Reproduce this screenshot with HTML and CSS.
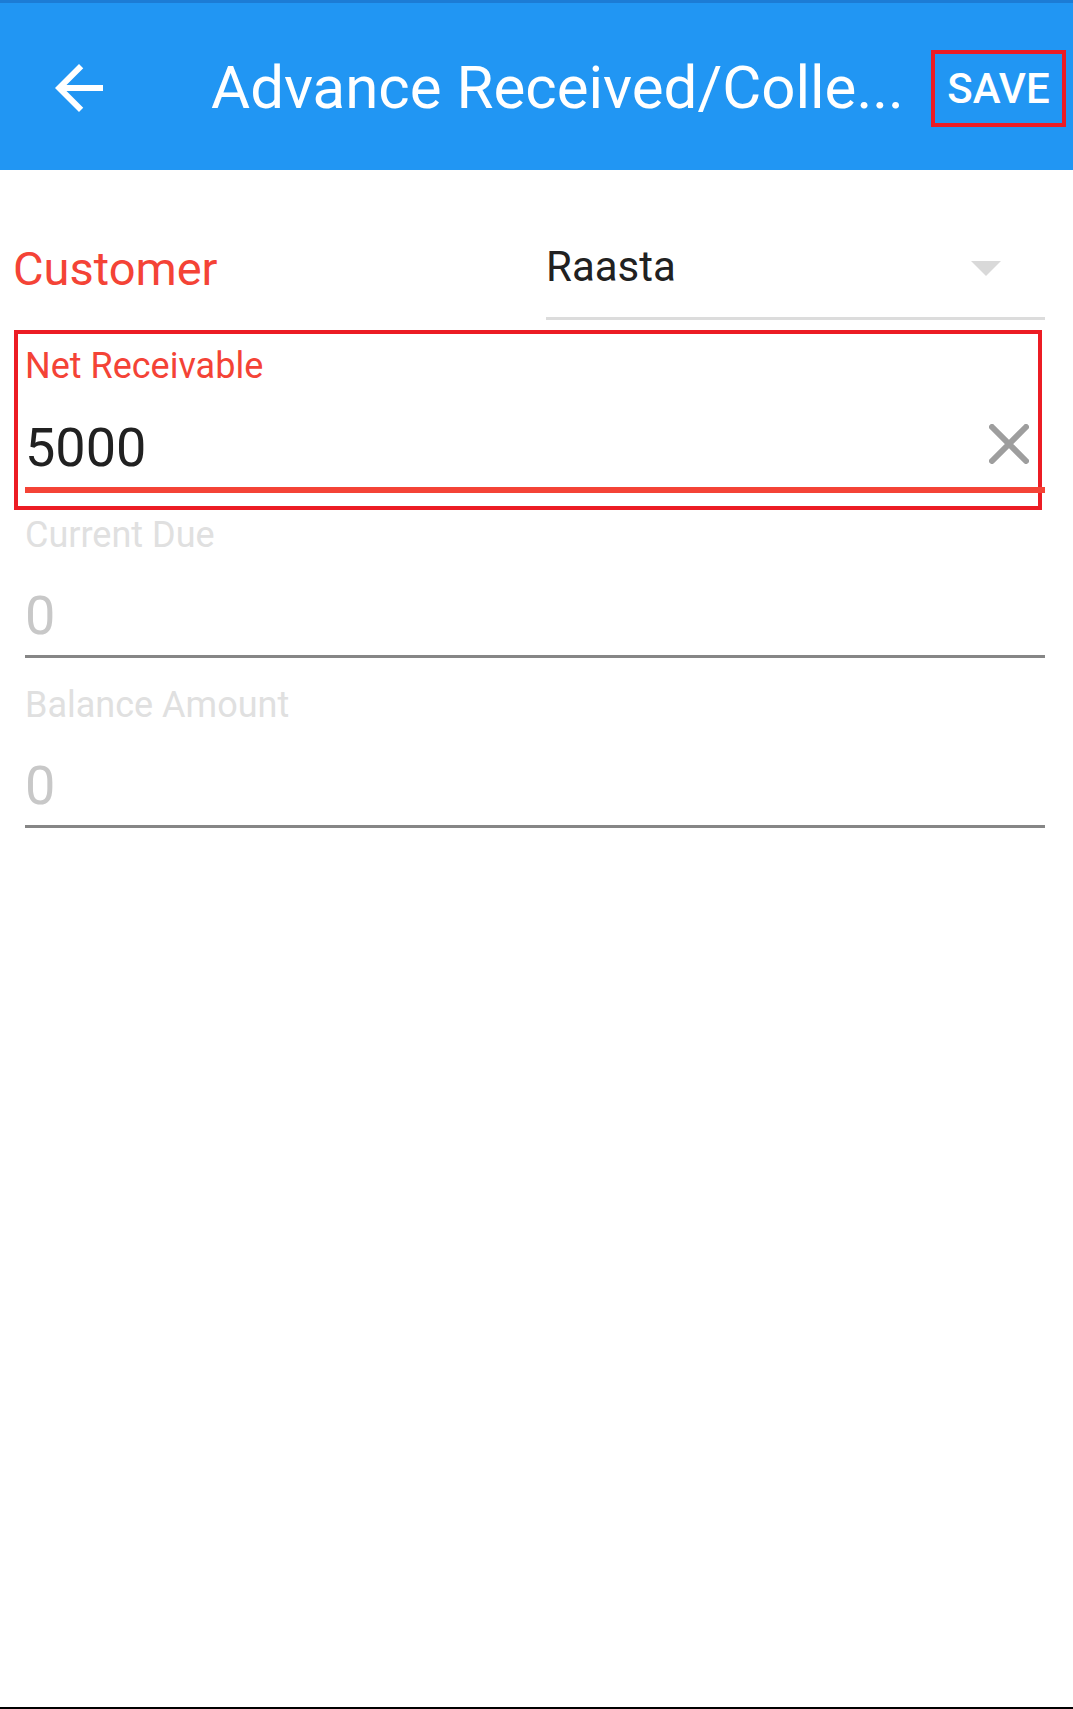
FILE: index.html
```html
<!DOCTYPE html>
<html lang="en">
<head>
    <meta charset="UTF-8">
    <meta name="viewport" content="width=device-width, initial-scale=1.0">
    <title>Advance Received/Collection</title>
    <link rel="stylesheet" href="styles.css">
</head>
<body>

    <header class="app-bar">
        <a href="#" class="back-btn" aria-label="Back">
            <svg viewBox="0 0 24 24" width="72" height="72">
                <path fill="#fff" d="M20 11H7.83l5.59-5.59L12 4l-8 8 8 8 1.41-1.41L7.83 13H20v-2z"/>
            </svg>
        </a>
        <h1 class="app-title" title="Advance Received/Collection">Advance Received/Colle...</h1>
        <button type="button" class="save-btn">SAVE</button>
    </header>

    <main class="form">

        <div class="customer-row">
            <label class="customer-label" for="customer">Customer</label>
            <div class="spinner" id="customer">
                <span class="spinner-value">Raasta</span>
                <span class="spinner-arrow"></span>
            </div>
        </div>

        <div class="highlight">
            <div class="field field-active">
                <label class="field-label">Net Receivable</label>
                <div class="field-input">
                    <span class="field-value">5000</span>
                    <svg class="clear-icon" viewBox="0 0 40 40" width="40" height="40">
                        <path d="M3 3L37 37M37 3L3 37" stroke="#9e9e9e" stroke-width="6" stroke-linecap="round"/>
                    </svg>
                </div>
            </div>
        </div>

        <div class="field field-disabled first">
            <label class="field-label">Current Due</label>
            <div class="field-input">
                <span class="field-value">0</span>
            </div>
        </div>

        <div class="field field-disabled">
            <label class="field-label">Balance Amount</label>
            <div class="field-input">
                <span class="field-value">0</span>
            </div>
        </div>

    </main>

    <div class="nav-edge"></div>

</body>
</html>
```

FILE: styles.css
```css
:root {
    --primary-color: #2196f3;
    --primary-dark: #1c7cd5;
    --accent-red: #f44336;
    --mark-red: #ec1c24;
    --text-color: #212121;
    --white-color: #fff;
}

* { box-sizing: border-box; margin: 0; padding: 0; }

body {
    font-family: Roboto, 'Noto Sans', sans-serif;
    color: var(--text-color);
    background-color: var(--white-color);
    min-height: 100vh;
    display: flex;
    flex-direction: column;
}

/* top bar */
.app-bar {
    display: flex;
    align-items: center;
    height: 170px;
    background-color: var(--primary-color);
    border-top: 3px solid var(--primary-dark);
}

.back-btn {
    display: flex;
    margin-left: 43px;
    margin-top: 2px;
}

.app-title {
    flex: 1;
    min-width: 0;
    margin-left: 96px;
    padding-top: 3px;
    font-size: 60px;
    font-weight: 400;
    line-height: 70px;
    color: var(--white-color);
    white-space: nowrap;
}

.save-btn {
    display: flex;
    align-items: center;
    justify-content: center;
    width: 135px;
    height: 77px;
    margin: 4px 7px 0 19px;
    border: 4px solid var(--mark-red);
    background: transparent;
    color: var(--white-color);
    font-family: inherit;
    font-size: 42px;
    font-weight: 500;
    cursor: pointer;
}

/* form */
.form {
    padding: 0 28px 0 13px;
}

.customer-row {
    display: flex;
    align-items: flex-start;
    margin-top: 71px;
}

.customer-label {
    font-size: 47px;
    line-height: 56px;
    color: var(--accent-red);
}

.spinner {
    display: flex;
    align-items: center;
    justify-content: space-between;
    width: 499px;
    margin-left: auto;
    padding-bottom: 24px;
    border-bottom: 3px solid #dcdcdc;
}

.spinner-value {
    font-size: 42px;
    line-height: 52px;
    color: var(--text-color);
}

.spinner-arrow {
    width: 0;
    height: 0;
    margin-right: 44px;
    margin-top: 3px;
    border-left: 15px solid transparent;
    border-right: 15px solid transparent;
    border-top: 15px solid #d9d9d9;
}

.highlight {
    margin: 10px 3px 0 1px;
    padding: 10px 0 13px 7px;
    border: 4px solid var(--mark-red);
}

.field-label {
    display: block;
    font-size: 36px;
    line-height: 44px;
}

.field-input {
    display: flex;
    align-items: center;
    justify-content: space-between;
    margin-top: 27px;
    padding-bottom: 7px;
    border-bottom: 3px solid #868686;
}

.field-value {
    font-size: 54px;
    line-height: 64px;
}

.field-active {
    margin-right: -7px;
}

.field-active .field-label {
    color: var(--accent-red);
}

.field-active .field-input {
    margin-top: 28px;
    padding-right: 16px;
    border-bottom: 6px solid var(--accent-red);
}

.field-active .field-value {
    color: var(--text-color);
}

.clear-icon {
    margin-bottom: 9px;
}

.field-disabled {
    margin-top: 25px;
    margin-left: 12px;
}

.field-disabled.first {
    margin-top: 3px;
}

.field-disabled .field-label {
    color: #e0e0e0;
}

.field-disabled .field-value {
    color: #c8c8c8;
}

.nav-edge {
    margin-top: auto;
    height: 2px;
    background-color: #000;
}
```
